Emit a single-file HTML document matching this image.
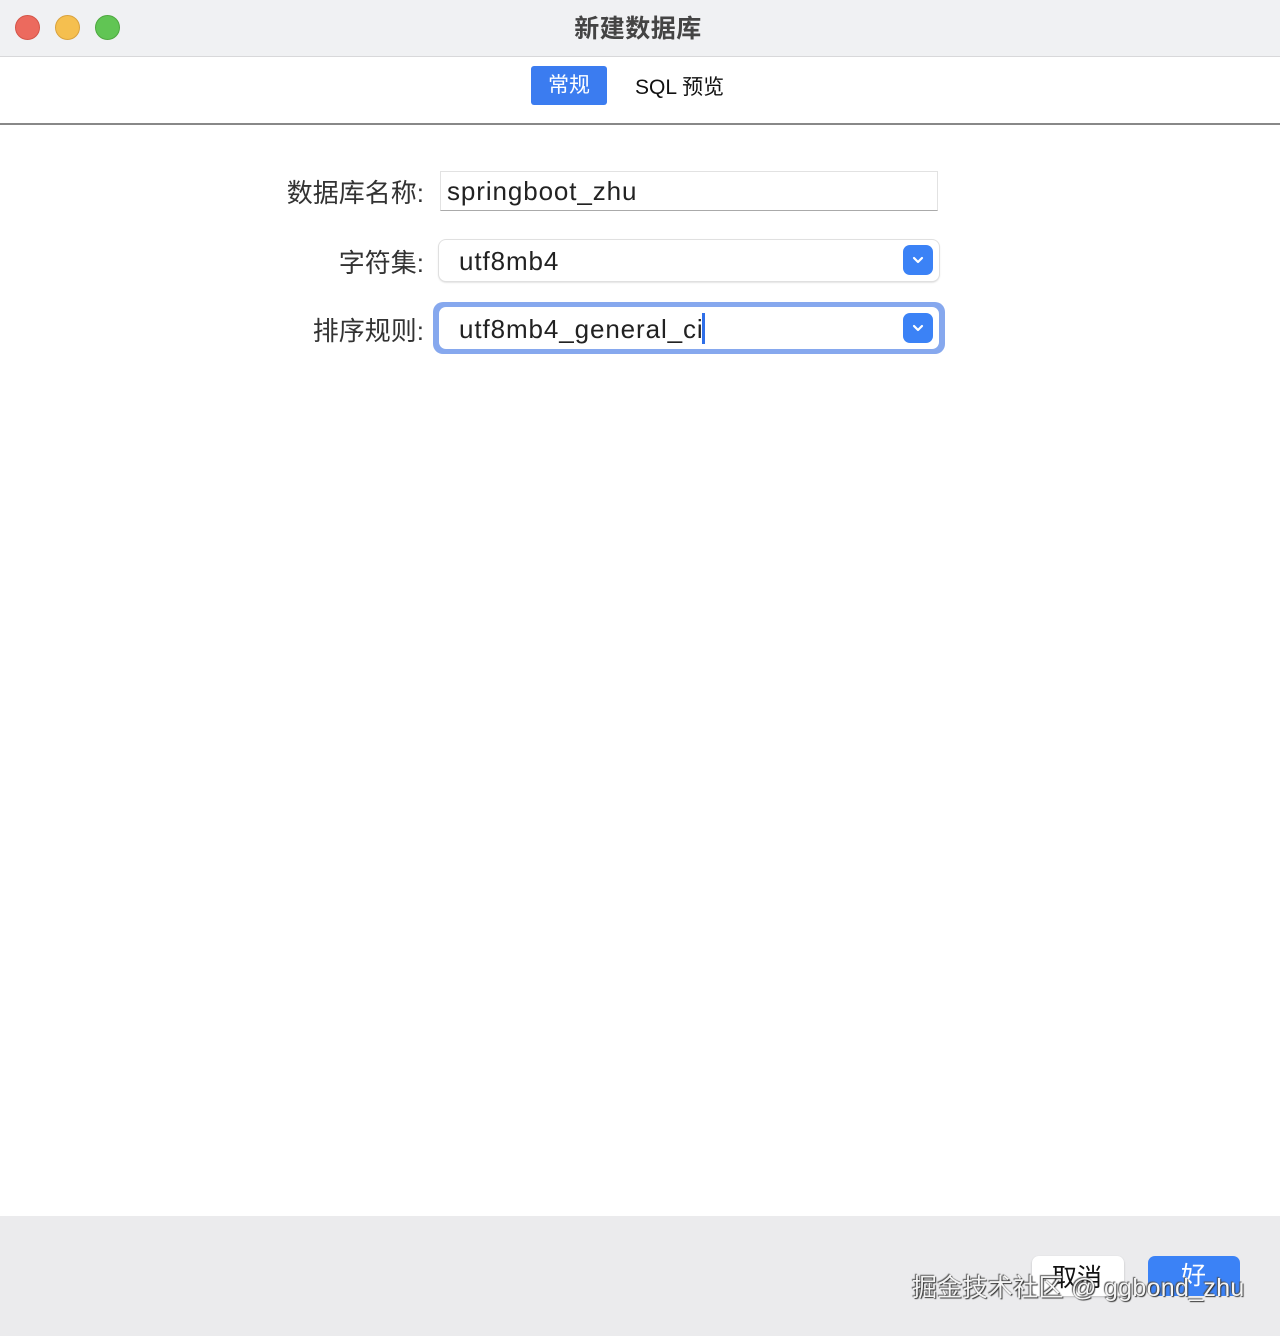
<!DOCTYPE html>
<html><head><meta charset="utf-8"><style>
*{margin:0;padding:0;box-sizing:border-box}
body{width:1280px;height:1336px;background:#fff;font-family:"Liberation Sans","Noto Sans CJK SC",sans-serif;position:relative;overflow:hidden;color:#222}
.abs{position:absolute}
.title{left:0;top:0;width:1280px;height:57px;background:#f0f1f3;border-bottom:1px solid #d8d8da}
.dot{width:25px;height:25px;border-radius:50%;top:15px}
.lbl{font-size:26px;color:#333;text-align:right;width:180px;left:244px}
.val{font-size:26px;color:#222;letter-spacing:0.9px}
.btnsel{width:30px;height:30px;border-radius:7px;background:#3b82f6;display:flex;align-items:center;justify-content:center}
</style></head><body>
<div class="abs title"></div>
<div class="abs dot" style="left:15px;background:#ec6a5e;border:1px solid #d45548"></div>
<div class="abs dot" style="left:55px;background:#f5bf4f;border:1px solid #d9a23d"></div>
<div class="abs dot" style="left:95px;background:#61c554;border:1px solid #4ea83f"></div>
<div class="abs" style="left:0;width:1276px;top:9px;text-align:center;font-size:25px;font-weight:bold;color:#444;letter-spacing:0.5px">新建数据库</div>

<div class="abs" style="left:531px;top:66px;width:76px;height:39px;background:#3b7cf0;border-radius:3px;color:#fff;font-size:21px;text-align:center;line-height:40px">常规</div>
<div class="abs" style="left:635px;top:71px;font-size:21px;color:#111">SQL 预览</div>
<div class="abs" style="left:0;top:123px;width:1280px;height:2px;background:#888"></div>

<div class="abs lbl" style="top:173px">数据库名称:</div>
<div class="abs" style="left:440px;top:171px;width:498px;height:40px;border:1px solid #e2e2e2;border-bottom:1px solid #aaa;background:#fff"></div>
<div class="abs val" style="left:447px;top:176px">springboot_zhu</div>

<div class="abs lbl" style="top:243px">字符集:</div>
<div class="abs" style="left:439px;top:240px;width:500px;height:41px;border-radius:7px;background:#fff;box-shadow:0 0 0 1px #e0e0e0,0 1px 2px rgba(0,0,0,.25)"></div>
<div class="abs val" style="left:459px;top:246px">utf8mb4</div>
<div class="abs btnsel" style="left:903px;top:245px"><svg width="14" height="10" viewBox="0 0 14 10"><path d="M3 3l4 4 4-4" stroke="#fff" stroke-width="2.2" fill="none" stroke-linecap="round" stroke-linejoin="round"/></svg></div>

<div class="abs lbl" style="top:311px">排序规则:</div>
<div class="abs" style="left:433px;top:302px;width:512px;height:52px;border-radius:10px;background:#86a8ee"></div>
<div class="abs" style="left:439px;top:307px;width:500px;height:42px;border-radius:7px;background:#fff"></div>
<div class="abs val" style="left:459px;top:314px">utf8mb4_general_ci</div>
<div class="abs" style="left:702px;top:313px;width:3px;height:31px;background:#2f6fe8"></div>
<div class="abs btnsel" style="left:903px;top:313px"><svg width="14" height="10" viewBox="0 0 14 10"><path d="M3 3l4 4 4-4" stroke="#fff" stroke-width="2.2" fill="none" stroke-linecap="round" stroke-linejoin="round"/></svg></div>

<div class="abs" style="left:0;top:1216px;width:1280px;height:120px;background:#ebebed"></div>
<div class="abs" style="left:1032px;top:1256px;width:92px;height:40px;background:#fff;border-radius:7px;box-shadow:0 1px 2px rgba(0,0,0,.2)"></div>
<div class="abs" style="left:1148px;top:1256px;width:92px;height:40px;background:#3b82f6;border-radius:7px"></div>
<div class="abs" style="left:1052px;top:1258px;font-size:25px;color:#111">取消</div>
<div class="abs" style="left:1181px;top:1256px;font-size:25px;color:#fff">好</div>
<div class="abs" style="left:912px;top:1268px;font-size:25px;color:#f4f4f4;text-shadow:1px 1px 1px #333,-1px -1px 1px #555;letter-spacing:0.3px">掘金技术社区 @ ggbond_zhu</div>
</body></html>
